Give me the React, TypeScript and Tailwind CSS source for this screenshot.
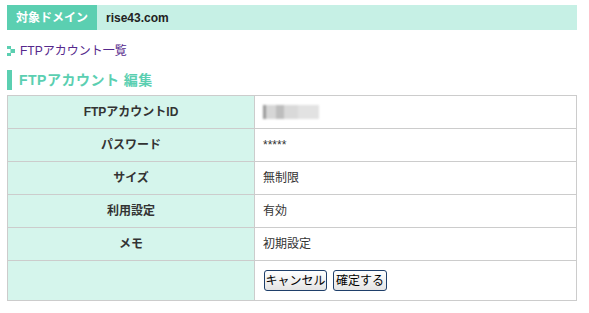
import React from "react";

const font = { fontFamily: '"Liberation Sans", "Noto Sans CJK JP", sans-serif' };

function Row({ label, children, tall }: { label: string; children?: React.ReactNode; tall?: boolean }) {
  return (
    <tr className={tall ? "h-[40px]" : "h-[33px]"}>
      <td className="w-[247px] border border-[#cccccc] bg-[#d5f5ec] text-center text-[12px] font-bold text-[#333333]">
        {label}
      </td>
      <td className="border border-[#cccccc] bg-white pl-[8px] text-[12px] text-[#333333]">{children}</td>
    </tr>
  );
}

export default function App() {
  return (
    <div className="w-[589px] h-[313px] bg-white pl-[7px] pt-[5px]" style={font}>
      <div className="flex h-[25px] w-[570px]">
        <div className="flex w-[90px] items-center justify-center bg-[#5bcfb1] text-[12px] font-bold text-white">
          対象ドメイン
        </div>
        <div className="flex flex-1 items-center bg-[#c6f0e5] pl-[9px] text-[12px] font-bold text-[#222222]">
          rise43.com
        </div>
      </div>

      <div className="mt-[14px] flex h-[14px] items-center gap-[5px]">
        <svg width="8" height="10" viewBox="0 0 8 10" className="shrink-0">
          <rect x="0" y="0" width="4" height="3" fill="#5bcfb1" />
          <rect x="3" y="3" width="2" height="4" fill="#a8e6d4" />
          <rect x="4" y="3" width="4" height="4" fill="#5bcfb1" />
          <rect x="0" y="7" width="4" height="3" fill="#5bcfb1" />
        </svg>
        <span className="text-[12px] text-[#55288c]">FTPアカウント一覧</span>
      </div>

      <div className="mt-[12px] flex h-[20px] items-center">
        <div className="h-[20px] w-[5px] bg-[#5bcfb1]" />
        <div className="ml-[7px] text-[14px] font-bold tracking-[0.5px] text-[#5bcfb1]">FTPアカウント 編集</div>
      </div>

      <table className="mt-[5px] w-[570px] border-collapse">
        <tbody>
          <Row label="FTPアカウントID">
            <div className="relative h-[14px] w-[56px]">
              <div className="absolute inset-0 flex blur-[1px]">
                <div className="h-full w-[3px] bg-[#999999]" />
                <div className="h-full w-[10px] bg-[#d6d6d6]" />
                <div className="h-full w-[8px] bg-[#bdbdbd]" />
                <div className="h-full w-[14px] bg-[#d9d9d9]" />
                <div className="h-full w-[21px] bg-[#e2e2e2]" />
              </div>
            </div>
          </Row>
          <Row label="パスワード">*****</Row>
          <Row label="サイズ">無制限</Row>
          <Row label="利用設定">有効</Row>
          <Row label="メモ">初期設定</Row>
          <Row label="" tall>
            <div className="flex gap-[6px] pl-[1px]">
              <button className="h-[21px] w-[63px] rounded-[3px] border border-[#1f3f6a] bg-gradient-to-b from-white to-[#e4e4e4] text-[12px] text-black">
                キャンセル
              </button>
              <button className="h-[21px] w-[54px] rounded-[3px] border border-[#1f3f6a] bg-gradient-to-b from-white to-[#e4e4e4] text-[12px] text-black">
                確定する
              </button>
            </div>
          </Row>
        </tbody>
      </table>
    </div>
  );
}
